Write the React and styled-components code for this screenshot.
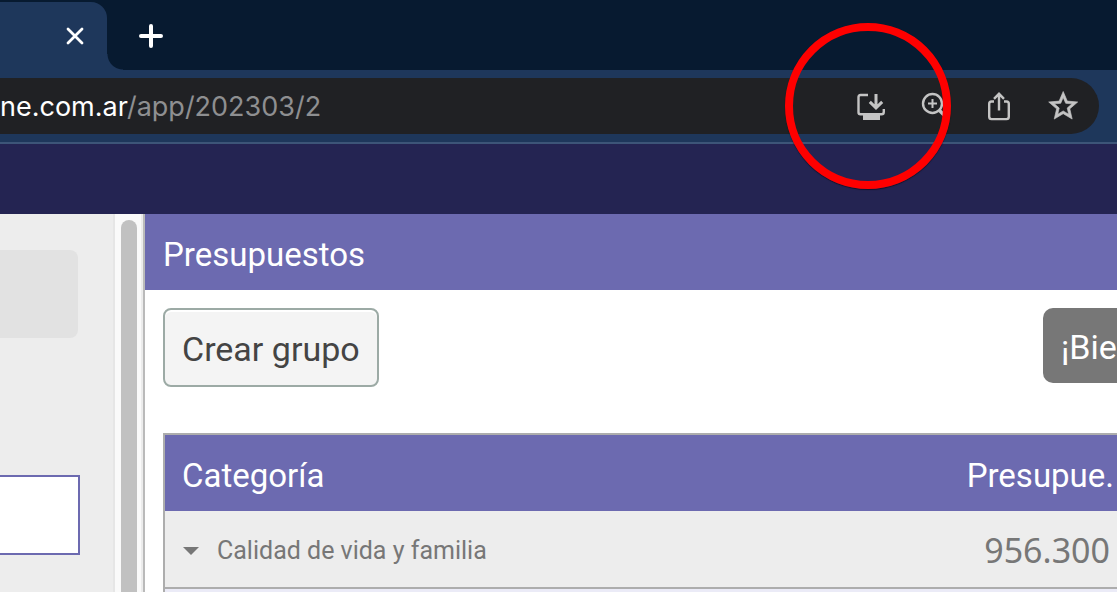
import React from "react";
import styled, { createGlobalStyle } from "styled-components";

const Global = createGlobalStyle`
  * { box-sizing: border-box; }
  body { margin: 0; background: #fff; font-family: Roboto, "Liberation Sans", sans-serif; }
  button, input { font: inherit; }
`;

const Shell = styled.div`
  display: flex;
  flex-direction: column;
  height: 100vh;
  overflow: hidden;
`;

const TabStrip = styled.div`
  display: flex;
  align-items: stretch;
  height: 70px;
  padding-top: 2px;
  background: #071a30;
`;

const Tab = styled.div`
  display: flex;
  align-items: center;
  justify-content: flex-end;
  width: 107px;
  padding-right: 16px;
  background: #1e375b;
  border-top-right-radius: 16px;
`;

const TabCurve = styled.div`
  align-self: flex-end;
  width: 16px;
  height: 16px;
  background: radial-gradient(circle at 100% 0, transparent 15px, #1e375b 16px);
`;

const IconButton = styled.button`
  display: flex;
  align-items: center;
  justify-content: center;
  flex: none;
  width: 32px;
  height: 32px;
  padding: 0;
  border: 0;
  background: none;
  color: ${(p) => p.$color || "#c4c4c4"};
`;

const NewTab = styled.div`
  display: flex;
  align-items: center;
  padding-left: 12px;
`;

const Toolbar = styled.div`
  height: 74px;
  padding: 8px 18px 8px 0;
  background: #1e375b;
  border-bottom: 2px solid #3d5578;
`;

const AddressBar = styled.div`
  display: flex;
  align-items: center;
  justify-content: space-between;
  height: 56px;
  padding-right: 20px;
  background: #202124;
  border-radius: 0 28px 28px 0;
`;

const Address = styled.div`
  padding-top: 2px;
  font-family: Inter, sans-serif;
  font-size: 27px;
  line-height: 32px;
  color: #fff;
  white-space: nowrap;
`;

const Path = styled.span`
  color: #8e8f91;
`;

const Actions = styled.div`
  position: relative;
  display: flex;
  gap: 32px;
`;

const Ring = styled.div`
  position: absolute;
  top: -67px;
  left: -70px;
  width: 166px;
  height: 166px;
  border: 8px solid #fe0000;
  border-radius: 50%;
  box-shadow: 0 1px 1px rgba(0, 0, 0, 0.5);
  pointer-events: none;
`;

const AppHeader = styled.header`
  flex: none;
  height: 70px;
  background: #242452;
`;

const Body = styled.div`
  display: flex;
  flex: 1;
  min-height: 0;
`;

const Sidebar = styled.aside`
  flex: none;
  width: 115px;
  padding: 36px 33px 0 0;
  background: #ededed;
  border-right: 2px solid #e6e6e6;
`;

const SideItem = styled.div`
  height: 88px;
  margin: 0 2px 137px 0;
  background: #e2e2e2;
  border-radius: 0 8px 8px 0;
`;

const SideInput = styled.input`
  display: block;
  width: 100%;
  height: 80px;
  padding: 0 16px;
  background: #fff;
  border: 2px solid #6c6ab0;
  border-left: 0;
  border-radius: 0;
`;

const ScrollTrack = styled.div`
  display: flex;
  flex: none;
  width: 30px;
  padding: 6px 4px 0 6px;
  background: #fafafa;
  border-right: 2px solid #bababa;
  box-shadow: inset -2px 0 #ececec;
`;

const ScrollThumb = styled.div`
  width: 16px;
  background: #c1c1c1;
  border-radius: 8px 8px 0 0;
`;

const Main = styled.main`
  flex: 1;
  min-width: 0;
`;

const Title = styled.h1`
  height: 76px;
  margin: 0;
  padding: 0 18px;
  background: #6c6ab0;
  color: #fff;
  font-size: 33px;
  font-weight: 400;
  line-height: 82px;
`;

const ActionRow = styled.div`
  display: flex;
  align-items: flex-start;
  justify-content: space-between;
  padding: 18px 0 0 18px;
  margin-bottom: 46px;
`;

const CreateButton = styled.button`
  height: 79px;
  padding: 2px 17px 0;
  background: #f4f4f4;
  border: 2px solid #9caaa5;
  border-radius: 8px;
  box-shadow: inset 0 2px #fff;
  color: #444;
  font-size: 34px;
  white-space: nowrap;
`;

const Notice = styled.div`
  width: 74px;
  height: 75px;
  padding-left: 18px;
  overflow: hidden;
  background: #777;
  border-radius: 10px 0 0 10px;
  color: #fff;
  font-size: 34px;
  line-height: 78px;
  white-space: nowrap;
`;

const TableWrap = styled.div`
  padding-left: 18px;
`;

const Table = styled.table`
  width: 100%;
  border-collapse: separate;
  border-spacing: 0;
  border-top: 2px solid #adadad;
  border-left: 2px solid #adadad;
`;

const HeadCell = styled.th`
  height: 76px;
  padding: ${(p) => (p.$end ? "4px 3px 0 0" : "4px 0 0 17px")};
  background: #6c6ab0;
  color: #fff;
  font-size: 33px;
  font-weight: 400;
  text-align: ${(p) => (p.$end ? "right" : "left")};
`;

const Cell = styled.td`
  height: 78px;
  padding: ${(p) => (p.$end ? "2px 7px 0 0" : "2px 0 0 18px")};
  background: ${(p) => (p.$child ? "#ebebf7" : "#ededed")};
  border-bottom: 2px solid #adadad;
  color: #777;
  text-align: ${(p) => (p.$end ? "right" : "left")};
`;

const Group = styled.div`
  display: flex;
  align-items: center;
  gap: 18px;
  font-size: 25px;
`;

const Amount = styled.span`
  font-family: "Noto Sans", sans-serif;
  font-size: 34px;
`;

export default function App() {
  return (
    <>
      <Global />
      <Shell>
        <TabStrip>
          <Tab>
            <IconButton $color="#fff" aria-label="Cerrar pestaña">
              <svg width="32" height="32" fill="none" stroke="currentColor" strokeWidth="2.8" strokeLinecap="round">
                <path d="M9 9l14 14M23 9L9 23" />
              </svg>
            </IconButton>
          </Tab>
          <TabCurve />
          <NewTab>
            <IconButton $color="#fff" aria-label="Nueva pestaña">
              <svg width="32" height="32" fill="none" stroke="currentColor" strokeWidth="4" strokeLinecap="round">
                <path d="M16 6v20M6 16h20" />
              </svg>
            </IconButton>
          </NewTab>
        </TabStrip>
        <Toolbar>
          <AddressBar>
            <Address>
              ne.com.ar<Path>/app/202303/2</Path>
            </Address>
            <Actions>
              <IconButton aria-label="Instalar">
                <svg width="32" height="32" fill="none" stroke="currentColor">
                  <path d="M13 5H5.5Q3.500 5 3.500 7v15.300q0 2 2 2h21q2.300 0 2.300-2.300v-3" strokeWidth="2.400" />
                  <path d="M8 25h17v5H8z" fill="currentColor" stroke="none" />
                  <path d="M21 4v13M14.800 11.800l6.200 6 6.200-6" strokeWidth="3" />
                </svg>
              </IconButton>
              <IconButton aria-label="Ampliar">
                <svg width="32" height="32" fill="none" stroke="currentColor">
                  <circle cx="13.500" cy="13.500" r="9.500" strokeWidth="2.400" />
                  <path d="M13.500 9v9M9 13.500h9" strokeWidth="2" />
                  <path d="M20.500 20.500l7 7" strokeWidth="3.400" />
                </svg>
              </IconButton>
              <IconButton aria-label="Compartir">
                <svg width="32" height="32" fill="none" stroke="currentColor" strokeWidth="2.400">
                  <path d="M11 11.500H8.500Q6.200 11.500 6.200 13.800v13q0 2.300 2.300 2.300h15q2.300 0 2.300-2.300V13.800Q25.800 11.500 23.500 11.500H21" />
                  <path d="M16 20.500V4M11 8.800l5-5 5 5" />
                </svg>
              </IconButton>
              <IconButton aria-label="Favorito">
                <svg width="32" height="32" fill="currentColor">
                  <path
                    transform="translate(-1.200 -1.400) scale(1.450)"
                    stroke="currentColor"
                    strokeWidth="0.450"
                    d="M22 9.240l-7.190-.620L12 2 9.190 8.630 2 9.240l5.460 4.730L5.820 21 12 17.270 18.180 21l-1.630-7.030L22 9.240zM12 15.400l-3.760 2.270 1-4.280-3.320-2.880 4.380-.380L12 6.100l1.710 4.040 4.380.380-3.320 2.880 1 4.280L12 15.400z"
                  />
                </svg>
              </IconButton>
              <Ring />
            </Actions>
          </AddressBar>
        </Toolbar>
        <AppHeader />
        <Body>
          <Sidebar>
            <SideItem />
            <SideInput aria-label="Buscar" />
          </Sidebar>
          <ScrollTrack>
            <ScrollThumb />
          </ScrollTrack>
          <Main>
            <Title>Presupuestos</Title>
            <ActionRow>
              <CreateButton>Crear grupo</CreateButton>
              <Notice>¡Bie</Notice>
            </ActionRow>
            <TableWrap>
              <Table>
                <thead>
                  <tr>
                    <HeadCell>Categoría</HeadCell>
                    <HeadCell $end>Presupue.</HeadCell>
                  </tr>
                </thead>
                <tbody>
                  <tr>
                    <Cell>
                      <Group>
                        <svg width="16" height="9" fill="currentColor">
                          <path d="M0 1h16L8 9z" />
                        </svg>
                        Calidad de vida y familia
                      </Group>
                    </Cell>
                    <Cell $end>
                      <Amount>956.300</Amount>
                    </Cell>
                  </tr>
                  <tr>
                    <Cell $child />
                    <Cell $child $end />
                  </tr>
                </tbody>
              </Table>
            </TableWrap>
          </Main>
        </Body>
      </Shell>
    </>
  );
}
